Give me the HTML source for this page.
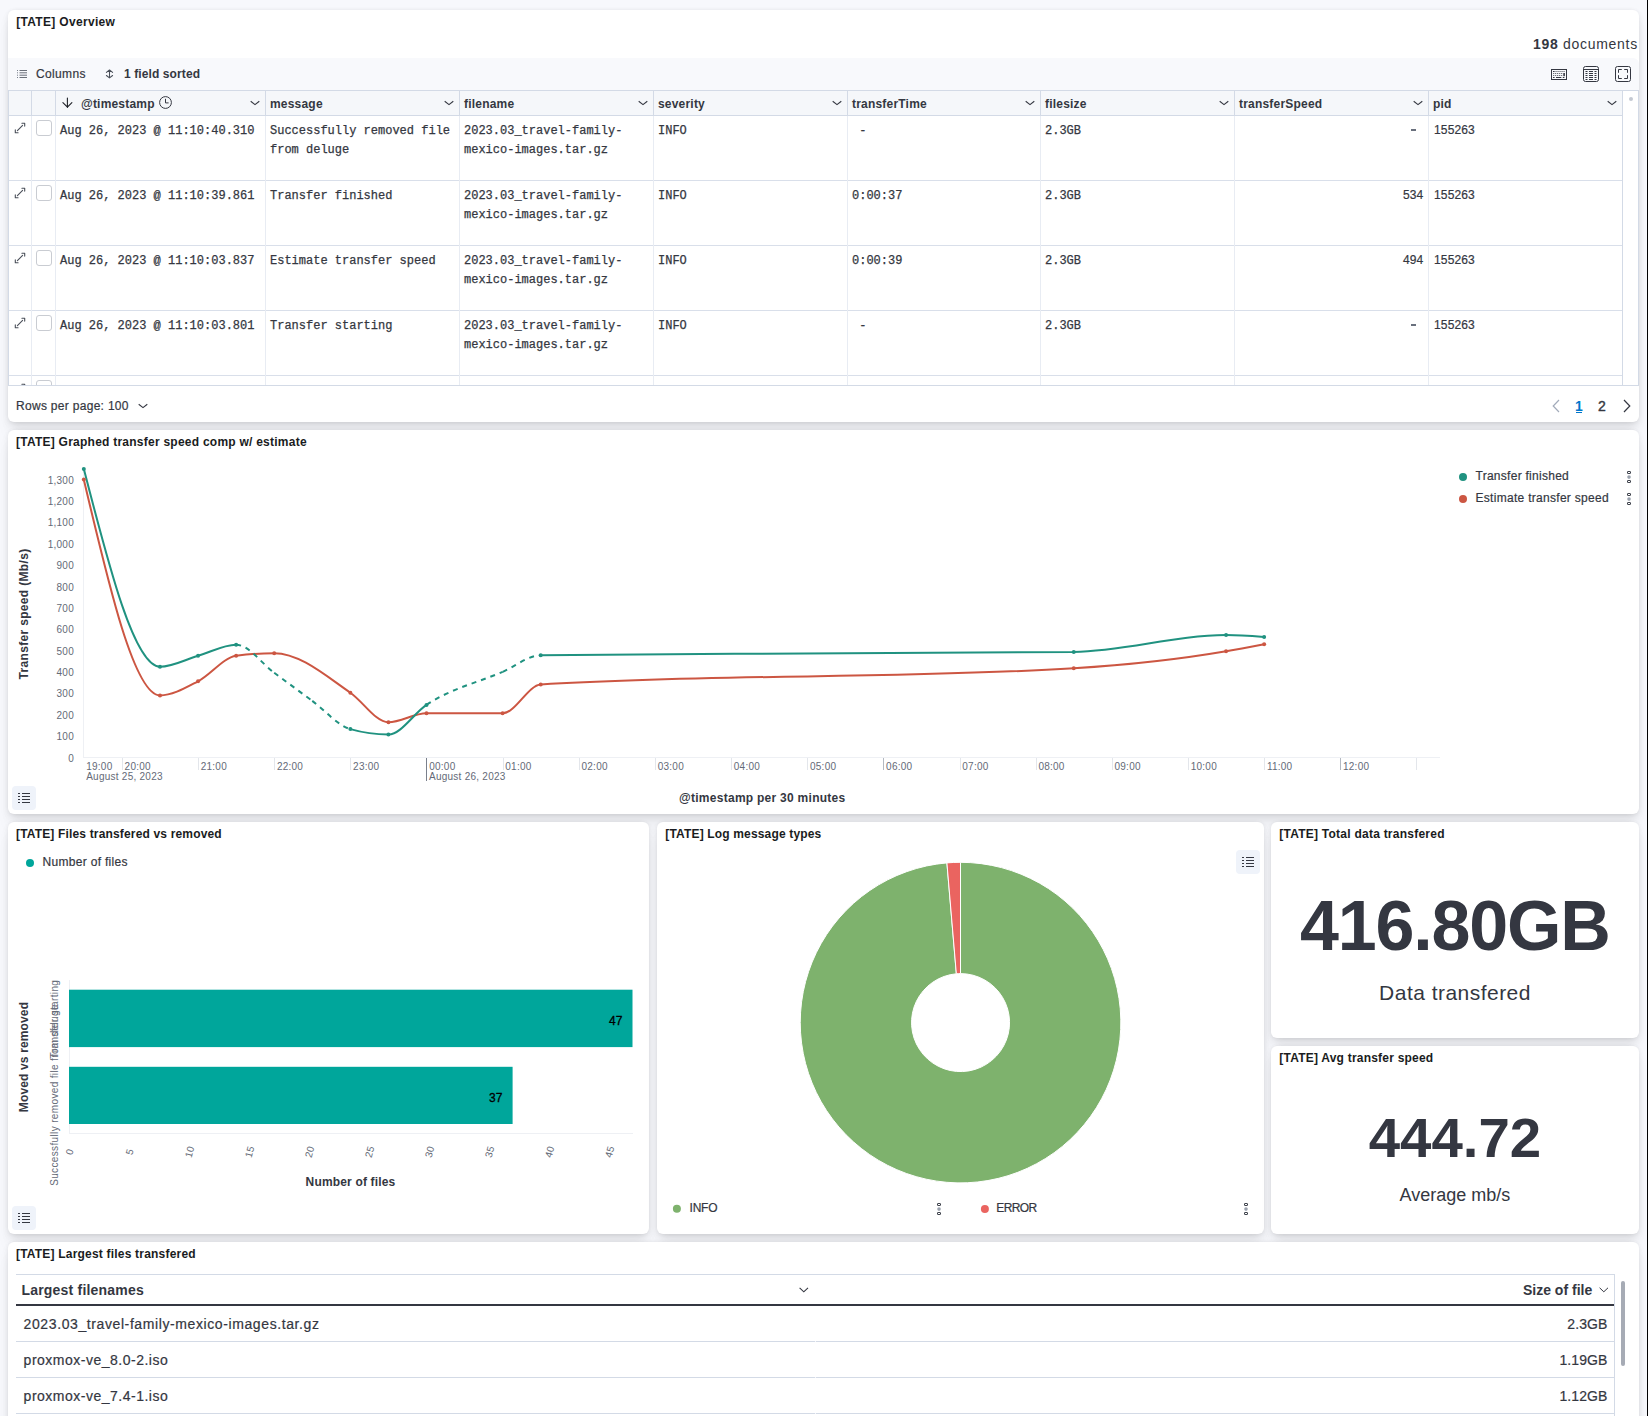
<!DOCTYPE html>
<html><head><meta charset="utf-8">
<style>
*{box-sizing:border-box;margin:0;padding:0}
html,body{width:1648px;height:1416px;overflow:hidden;background:#f7f8fc;font-family:"Liberation Sans",sans-serif;color:#343741}
.a{position:absolute;white-space:pre;line-height:1}
.p{position:absolute;background:#fff;border-radius:6px;box-shadow:0 .9px 4px -1px rgba(0,0,0,.08),0 2.6px 8px -1px rgba(0,0,0,.06),0 5.7px 12px -1px rgba(0,0,0,.05),0 15px 15px -1px rgba(0,0,0,.04)}
.t{font-weight:bold;font-size:12px;color:#1a1c21}
.m{font-family:"Liberation Mono",monospace;font-size:12px;color:#343741;-webkit-text-stroke:.25px #343741}
.hd{font-size:12px;font-weight:bold;color:#343741;letter-spacing:.2px}
.tk{font-size:10px;color:#646a77;letter-spacing:.25px}
.rs{-webkit-text-stroke:.2px currentColor}
.vl{position:absolute;width:1px;background:#e3e8f2}
.hl{position:absolute;height:1px;background:#d3dae6}
svg{position:absolute;overflow:visible}
</style></head><body>
<div class="a" style="left:1647px;top:0;width:1px;height:1416px;background:#000"></div>

<!-- P1 Overview -->
<div class="p" style="left:8px;top:10px;width:1631px;height:412px"></div>
<!-- P2 chart -->
<div class="p" style="left:8px;top:430px;width:1631px;height:384px"></div>
<!-- P3 bar -->
<div class="p" style="left:8px;top:822px;width:641px;height:412px"></div>
<!-- P4 pie -->
<div class="p" style="left:657px;top:822px;width:607px;height:412px"></div>
<!-- P5 total -->
<div class="p" style="left:1271px;top:822px;width:368px;height:216px"></div>
<!-- P6 avg -->
<div class="p" style="left:1271px;top:1046px;width:368px;height:188px"></div>
<!-- P7 largest -->
<div class="p" style="left:8px;top:1242px;width:1631px;height:200px"></div>

<div class="a" style="left:1533px;top:37px;font-size:14px;color:#343741;letter-spacing:.7px"><b>198</b> documents</div>
<div class="a" style="left:8px;top:58px;width:1631px;height:32px;background:#f8f9fc;border-radius:0 6px 0 0"></div>
<div class="a" style="left:8px;top:90px;width:1614px;height:26px;background:#f5f7fa"></div>
<div class="hl" style="left:8px;top:90px;width:1631px"></div>
<div class="hl" style="left:8px;top:115px;width:1614px"></div>
<div class="hl" style="left:8px;top:180px;width:1614px;background:#d9dfea"></div>
<div class="hl" style="left:8px;top:245px;width:1614px;background:#d9dfea"></div>
<div class="hl" style="left:8px;top:310px;width:1614px;background:#d9dfea"></div>
<div class="hl" style="left:8px;top:375px;width:1614px;background:#d9dfea"></div>
<div class="hl" style="left:8px;top:385px;width:1631px"></div>
<div class="vl" style="left:8px;top:90px;height:26px;background:#d3dae6"></div>
<div class="vl" style="left:8px;top:116px;height:269px;background:#d3dae6"></div>
<div class="vl" style="left:31px;top:90px;height:26px;background:#d3dae6"></div>
<div class="vl" style="left:31px;top:116px;height:269px;background:#e8ecf3"></div>
<div class="vl" style="left:55px;top:90px;height:26px;background:#d3dae6"></div>
<div class="vl" style="left:55px;top:116px;height:269px;background:#e8ecf3"></div>
<div class="vl" style="left:265px;top:90px;height:26px;background:#d3dae6"></div>
<div class="vl" style="left:265px;top:116px;height:269px;background:#e8ecf3"></div>
<div class="vl" style="left:459px;top:90px;height:26px;background:#d3dae6"></div>
<div class="vl" style="left:459px;top:116px;height:269px;background:#e8ecf3"></div>
<div class="vl" style="left:653px;top:90px;height:26px;background:#d3dae6"></div>
<div class="vl" style="left:653px;top:116px;height:269px;background:#e8ecf3"></div>
<div class="vl" style="left:847px;top:90px;height:26px;background:#d3dae6"></div>
<div class="vl" style="left:847px;top:116px;height:269px;background:#e8ecf3"></div>
<div class="vl" style="left:1040px;top:90px;height:26px;background:#d3dae6"></div>
<div class="vl" style="left:1040px;top:116px;height:269px;background:#e8ecf3"></div>
<div class="vl" style="left:1234px;top:90px;height:26px;background:#d3dae6"></div>
<div class="vl" style="left:1234px;top:116px;height:269px;background:#e8ecf3"></div>
<div class="vl" style="left:1428px;top:90px;height:26px;background:#d3dae6"></div>
<div class="vl" style="left:1428px;top:116px;height:269px;background:#e8ecf3"></div>
<div class="vl" style="left:1622px;top:90px;height:26px;background:#d3dae6"></div>
<div class="vl" style="left:1622px;top:116px;height:269px;background:#d3dae6"></div>
<div class="vl" style="left:1638px;top:90px;height:296px;background:#d3dae6"></div>
<div class="a" style="left:1629px;top:97px;width:4px;height:4px;border-radius:2px;background:#c4c9d2"></div>
<div class="a hd" style="left:81px;top:98px">@timestamp</div>
<div class="a hd" style="left:270px;top:98px">message</div>
<div class="a hd" style="left:464px;top:98px">filename</div>
<div class="a hd" style="left:658px;top:98px">severity</div>
<div class="a hd" style="left:852px;top:98px">transferTime</div>
<div class="a hd" style="left:1045px;top:98px">filesize</div>
<div class="a hd" style="left:1239px;top:98px">transferSpeed</div>
<div class="a hd" style="left:1433px;top:98px">pid</div>
<svg style="left:250px;top:100px" width="11" height="7" viewBox="0 0 11 7"><path d="M.7 1.2 5 4.6 9.3 1.2" fill="none" stroke="#343741" stroke-width="1.1"/></svg>
<svg style="left:444px;top:100px" width="11" height="7" viewBox="0 0 11 7"><path d="M.7 1.2 5 4.6 9.3 1.2" fill="none" stroke="#343741" stroke-width="1.1"/></svg>
<svg style="left:638px;top:100px" width="11" height="7" viewBox="0 0 11 7"><path d="M.7 1.2 5 4.6 9.3 1.2" fill="none" stroke="#343741" stroke-width="1.1"/></svg>
<svg style="left:832px;top:100px" width="11" height="7" viewBox="0 0 11 7"><path d="M.7 1.2 5 4.6 9.3 1.2" fill="none" stroke="#343741" stroke-width="1.1"/></svg>
<svg style="left:1025px;top:100px" width="11" height="7" viewBox="0 0 11 7"><path d="M.7 1.2 5 4.6 9.3 1.2" fill="none" stroke="#343741" stroke-width="1.1"/></svg>
<svg style="left:1219px;top:100px" width="11" height="7" viewBox="0 0 11 7"><path d="M.7 1.2 5 4.6 9.3 1.2" fill="none" stroke="#343741" stroke-width="1.1"/></svg>
<svg style="left:1413px;top:100px" width="11" height="7" viewBox="0 0 11 7"><path d="M.7 1.2 5 4.6 9.3 1.2" fill="none" stroke="#343741" stroke-width="1.1"/></svg>
<svg style="left:1607px;top:100px" width="11" height="7" viewBox="0 0 11 7"><path d="M.7 1.2 5 4.6 9.3 1.2" fill="none" stroke="#343741" stroke-width="1.1"/></svg>
<svg style="left:62px;top:96px" width="11" height="13" viewBox="0 0 11 13"><path d="M5.4 2V11.4M.9 6.6 5.4 11.2 9.9 6.6" fill="none" stroke="#1f2228" stroke-width="1.1" stroke-linecap="round" stroke-linejoin="round"/></svg>
<svg style="left:159px;top:96px" width="13" height="13" viewBox="0 0 13 13"><circle cx="6.5" cy="6.5" r="5.9" fill="none" stroke="#343741" stroke-width="1"/><path d="M6.5 2.8V6.9H9.6" fill="none" stroke="#343741" stroke-width="1"/></svg>
<svg style="left:14px;top:122px" width="12" height="12" viewBox="0 0 12 12"><path d="M3.4 8.6 8.6 3.4M7.9 1.3H10.7V4.1M1.3 7.9V10.7H4.1" fill="none" stroke="#4a4f59" stroke-width="1.1" stroke-linecap="round" stroke-linejoin="round"/></svg>
<div class="a" style="left:36px;top:120px;width:16px;height:16px;border:1px solid #c9ccd2;border-radius:3px;background:#fff"></div>
<div class="a m" style="left:60px;top:125px">Aug 26, 2023 @ 11:10:40.310</div>
<div class="a m" style="left:270px;top:125px">Successfully removed file</div>
<div class="a m" style="left:270px;top:144px">from deluge</div>
<div class="a m" style="left:464px;top:125px">2023.03_travel-family-</div>
<div class="a m" style="left:464px;top:144px">mexico-images.tar.gz</div>
<div class="a m" style="left:658px;top:125px">INFO</div>
<div class="a m" style="left:852px;top:125px"> -</div>
<div class="a m" style="left:1045px;top:125px">2.3GB</div>
<div class="a" style="left:1411px;top:129px;width:4.7px;height:2px;background:#69707d"></div>
<div class="a rs" style="left:1434px;top:124px;font-size:12px;letter-spacing:.15px">155263</div>
<svg style="left:14px;top:187px" width="12" height="12" viewBox="0 0 12 12"><path d="M3.4 8.6 8.6 3.4M7.9 1.3H10.7V4.1M1.3 7.9V10.7H4.1" fill="none" stroke="#4a4f59" stroke-width="1.1" stroke-linecap="round" stroke-linejoin="round"/></svg>
<div class="a" style="left:36px;top:185px;width:16px;height:16px;border:1px solid #c9ccd2;border-radius:3px;background:#fff"></div>
<div class="a m" style="left:60px;top:190px">Aug 26, 2023 @ 11:10:39.861</div>
<div class="a m" style="left:270px;top:190px">Transfer finished</div>
<div class="a m" style="left:464px;top:190px">2023.03_travel-family-</div>
<div class="a m" style="left:464px;top:209px">mexico-images.tar.gz</div>
<div class="a m" style="left:658px;top:190px">INFO</div>
<div class="a m" style="left:852px;top:190px">0:00:37</div>
<div class="a m" style="left:1045px;top:190px">2.3GB</div>
<div class="a rs" style="left:1403px;top:189px;font-size:12px;letter-spacing:.1px">534</div>
<div class="a rs" style="left:1434px;top:189px;font-size:12px;letter-spacing:.15px">155263</div>
<svg style="left:14px;top:252px" width="12" height="12" viewBox="0 0 12 12"><path d="M3.4 8.6 8.6 3.4M7.9 1.3H10.7V4.1M1.3 7.9V10.7H4.1" fill="none" stroke="#4a4f59" stroke-width="1.1" stroke-linecap="round" stroke-linejoin="round"/></svg>
<div class="a" style="left:36px;top:250px;width:16px;height:16px;border:1px solid #c9ccd2;border-radius:3px;background:#fff"></div>
<div class="a m" style="left:60px;top:255px">Aug 26, 2023 @ 11:10:03.837</div>
<div class="a m" style="left:270px;top:255px">Estimate transfer speed</div>
<div class="a m" style="left:464px;top:255px">2023.03_travel-family-</div>
<div class="a m" style="left:464px;top:274px">mexico-images.tar.gz</div>
<div class="a m" style="left:658px;top:255px">INFO</div>
<div class="a m" style="left:852px;top:255px">0:00:39</div>
<div class="a m" style="left:1045px;top:255px">2.3GB</div>
<div class="a rs" style="left:1403px;top:254px;font-size:12px;letter-spacing:.1px">494</div>
<div class="a rs" style="left:1434px;top:254px;font-size:12px;letter-spacing:.15px">155263</div>
<svg style="left:14px;top:317px" width="12" height="12" viewBox="0 0 12 12"><path d="M3.4 8.6 8.6 3.4M7.9 1.3H10.7V4.1M1.3 7.9V10.7H4.1" fill="none" stroke="#4a4f59" stroke-width="1.1" stroke-linecap="round" stroke-linejoin="round"/></svg>
<div class="a" style="left:36px;top:315px;width:16px;height:16px;border:1px solid #c9ccd2;border-radius:3px;background:#fff"></div>
<div class="a m" style="left:60px;top:320px">Aug 26, 2023 @ 11:10:03.801</div>
<div class="a m" style="left:270px;top:320px">Transfer starting</div>
<div class="a m" style="left:464px;top:320px">2023.03_travel-family-</div>
<div class="a m" style="left:464px;top:339px">mexico-images.tar.gz</div>
<div class="a m" style="left:658px;top:320px">INFO</div>
<div class="a m" style="left:852px;top:320px"> -</div>
<div class="a m" style="left:1045px;top:320px">2.3GB</div>
<div class="a" style="left:1411px;top:324px;width:4.7px;height:2px;background:#69707d"></div>
<div class="a rs" style="left:1434px;top:319px;font-size:12px;letter-spacing:.15px">155263</div>
<div class="a" style="left:8px;top:376px;width:1614px;height:9px;overflow:hidden"><svg style="left:6px;top:7px" width="12" height="12" viewBox="0 0 12 12"><path d="M3.4 8.6 8.6 3.4M7.9 1.3H10.7V4.1M1.3 7.9V10.7H4.1" fill="none" stroke="#4a4f59" stroke-width="1.1" stroke-linecap="round" stroke-linejoin="round"/></svg><div class="a" style="left:28px;top:4px;width:16px;height:16px;border:1px solid #c9ccd2;border-radius:3px"></div></div>
<svg style="left:17px;top:70px" width="10" height="8" viewBox="0 0 10 8"><path d="M0 .5h1M0 2.8h1M0 5.2h1M0 7.5h1" fill="none" stroke="#69707d" stroke-width=".9"/><path d="M2.5 .5H10M2.5 2.8H10M2.5 5.2H10M2.5 7.5H10" fill="none" stroke="#5a606b" stroke-width=".9"/></svg>
<div class="a rs" style="left:36px;top:68px;font-size:12px;letter-spacing:.35px">Columns</div>
<svg style="left:105px;top:67px" width="9" height="13" viewBox="0 0 9 13"><path d="M4.5 3.2V10.7M1.4 5.4 4.5 3 7.6 5.4M1.4 8.5 4.5 10.9 7.6 8.5" fill="none" stroke="#4a4f59" stroke-width="1.05" stroke-linecap="round" stroke-linejoin="round"/></svg>
<div class="a" style="left:124px;top:68px;font-size:12px;font-weight:bold;letter-spacing:.1px">1 field sorted</div>
<svg style="left:1551px;top:69px" width="16" height="11" viewBox="0 0 16 11"><rect x=".5" y=".5" width="15" height="10" fill="none" stroke="#343741"/><path d="M2 2.5h1.6M4.6 2.5h.9M6.6 2.5h.9M8.6 2.5h.9M10.6 2.5h.9M12.6 2.5h.9M2.3 4.5h.9M4.3 4.5h.9M6.3 4.5h.9M8.3 4.5h.9M10.3 4.5h.9M2.3 6.5h.9M4.3 6.5h.9M6.3 6.5h.9M8.3 6.5h.9M10.3 6.5h.9M2 8.5h1.6M5 8.5h5.3M11.8 8.5h1.6" fill="none" stroke="#343741" stroke-width="1"/><rect x="12.3" y="4" width="1.6" height="3.2" fill="#343741"/></svg>
<svg style="left:1583px;top:66px" width="16" height="16" viewBox="0 0 16 16"><rect x=".5" y=".5" width="15" height="15" rx="2" fill="none" stroke="#343741"/><path d="M.5 3.5h15M2.5 5.5h2M6 5.5h4M11.5 5.5h2M2.5 7.5h2M6 7.5h4M11.5 7.5h2M2.5 9.5h2M6 9.5h4M11.5 9.5h2M2.5 11.5h2M6 11.5h4M11.5 11.5h2M2.5 13.5h2M6 13.5h4M11.5 13.5h2" fill="none" stroke="#343741"/></svg>
<svg style="left:1615px;top:66px" width="16" height="16" viewBox="0 0 16 16"><rect x=".5" y=".5" width="15" height="15" rx="2" fill="none" stroke="#343741"/><path d="M3.5 6.8V3.5H6.8M9.2 3.5H12.5V6.8M12.5 9.2V12.5H9.2M6.8 12.5H3.5V9.2" fill="none" stroke="#343741"/></svg>
<div class="a rs" style="left:16px;top:400px;font-size:12px;letter-spacing:.3px">Rows per page: 100</div>
<svg style="left:138.2px;top:402.7px" width="11" height="7" viewBox="0 0 11 7"><path d="M.7 1.2 5 4.6 9.3 1.2" fill="none" stroke="#343741" stroke-width="1.1"/></svg>
<svg style="left:1552px;top:399px" width="8" height="14" viewBox="0 0 8 14"><path d="M7 1 1.2 7 7 13" fill="none" stroke="#a2abba" stroke-width="1.2"/></svg>
<div class="a" style="left:1575px;top:399px;font-size:14px;font-weight:bold;color:#0077cc">1</div>
<div class="a" style="left:1576px;top:412px;width:6px;height:1px;background:#0077cc"></div>
<div class="a" style="left:1598px;top:399px;font-size:14px;color:#343741;-webkit-text-stroke:.4px #343741">2</div>
<svg style="left:1623px;top:399px" width="8" height="14" viewBox="0 0 8 14"><path d="M1 1 6.8 7 1 13" fill="none" stroke="#343741" stroke-width="1.2"/></svg>
<svg style="left:0;top:0" width="1648" height="1416"><path d="M83.5 470V758M83.5 757.5H1440" stroke="#eef0f4" stroke-width="1" fill="none"/><path d="M122.5 758V770" stroke="#e3e6eb" stroke-width="1"/><path d="M198.5 758V770" stroke="#e3e6eb" stroke-width="1"/><path d="M274.5 758V770" stroke="#e3e6eb" stroke-width="1"/><path d="M350.5 758V770" stroke="#e3e6eb" stroke-width="1"/><path d="M426.5 758V781" stroke="#7a808c" stroke-width="1"/><path d="M503.5 758V770" stroke="#e3e6eb" stroke-width="1"/><path d="M579.5 758V770" stroke="#e3e6eb" stroke-width="1"/><path d="M655.5 758V770" stroke="#e3e6eb" stroke-width="1"/><path d="M731.5 758V770" stroke="#e3e6eb" stroke-width="1"/><path d="M807.5 758V770" stroke="#e3e6eb" stroke-width="1"/><path d="M883.5 758V770" stroke="#b4b9c2" stroke-width="1"/><path d="M960.5 758V770" stroke="#e3e6eb" stroke-width="1"/><path d="M1036.5 758V770" stroke="#e3e6eb" stroke-width="1"/><path d="M1112.5 758V770" stroke="#e3e6eb" stroke-width="1"/><path d="M1188.5 758V770" stroke="#e3e6eb" stroke-width="1"/><path d="M1264.5 758V770" stroke="#e3e6eb" stroke-width="1"/><path d="M1340.5 758V770" stroke="#b4b9c2" stroke-width="1"/><path d="M1416.5 758V770" stroke="#e3e6eb" stroke-width="1"/><path d="M83.82,479.60C109.21,587.50 134.59,695.40 159.97,695.40M159.97,695.40C172.67,695.40 185.36,687.90 198.05,681.30M198.05,681.30C210.74,674.70 223.43,657.53 236.12,655.80M236.12,655.80C248.82,654.07 261.51,653.20 274.20,653.20M274.20,653.20C299.58,653.20 324.97,675.16 350.35,692.70M350.35,692.70C363.04,701.47 375.73,722.30 388.43,722.30M388.43,722.30C401.12,722.30 413.81,713.30 426.50,713.30M426.50,713.30C451.88,713.30 477.27,713.30 502.65,713.30M502.65,713.30C515.34,713.30 528.03,685.27 540.73,684.50M540.73,684.50C718.41,673.70 896.09,679.10 1073.78,668.30M1073.78,668.30C1124.54,665.21 1175.31,660.01 1226.08,651.30M1226.08,651.30C1238.77,649.12 1251.46,646.66 1264.15,644.20" stroke="#cc5642" stroke-width="2" fill="none" stroke-linecap="round"/><path d="M83.82,468.90C109.21,567.80 134.59,666.70 159.97,666.70M159.97,666.70C172.67,666.70 185.36,659.47 198.05,655.80M198.05,655.80C210.74,652.13 223.43,644.70 236.12,644.70M350.35,729.10C363.04,732.70 375.73,734.50 388.43,734.50M388.43,734.50C401.12,734.50 413.81,713.32 426.50,704.90M540.73,655.30C718.41,653.03 896.09,654.17 1073.78,651.90M1073.78,651.90C1124.54,651.25 1175.31,635.00 1226.08,635.00M1226.08,635.00C1238.77,635.00 1251.46,635.95 1264.15,636.90" stroke="#209280" stroke-width="2" fill="none" stroke-linecap="round"/><path d="M236.12,644.70C248.82,644.70 261.51,663.43 274.20,672.80" stroke="#209280" stroke-width="2" fill="none" stroke-dasharray="5 5"/><path d="M274.20,672.80C286.89,682.17 299.58,691.52 312.27,700.90" stroke="#209280" stroke-width="2" fill="none" stroke-dasharray="5 5"/><path d="M312.27,700.90C324.97,710.28 337.66,725.50 350.35,729.10" stroke="#209280" stroke-width="2" fill="none" stroke-dasharray="5 5"/><path d="M426.50,704.90C451.88,688.07 477.27,682.81 502.65,671.80" stroke="#209280" stroke-width="2" fill="none" stroke-dasharray="5 5"/><path d="M502.65,671.80C515.34,666.29 528.03,655.46 540.73,655.30" stroke="#209280" stroke-width="2" fill="none" stroke-dasharray="5 5"/><circle cx="83.82" cy="479.60" r="2" fill="#cc5642"/><circle cx="159.97" cy="695.40" r="2" fill="#cc5642"/><circle cx="198.05" cy="681.30" r="2" fill="#cc5642"/><circle cx="236.12" cy="655.80" r="2" fill="#cc5642"/><circle cx="274.20" cy="653.20" r="2" fill="#cc5642"/><circle cx="350.35" cy="692.70" r="2" fill="#cc5642"/><circle cx="388.43" cy="722.30" r="2" fill="#cc5642"/><circle cx="426.50" cy="713.30" r="2" fill="#cc5642"/><circle cx="502.65" cy="713.30" r="2" fill="#cc5642"/><circle cx="540.73" cy="684.50" r="2" fill="#cc5642"/><circle cx="1073.78" cy="668.30" r="2" fill="#cc5642"/><circle cx="1226.08" cy="651.30" r="2" fill="#cc5642"/><circle cx="1264.15" cy="644.20" r="2" fill="#cc5642"/><circle cx="83.82" cy="468.90" r="2" fill="#209280"/><circle cx="159.97" cy="666.70" r="2" fill="#209280"/><circle cx="198.05" cy="655.80" r="2" fill="#209280"/><circle cx="236.12" cy="644.70" r="2" fill="#209280"/><circle cx="350.35" cy="729.10" r="2" fill="#209280"/><circle cx="388.43" cy="734.50" r="2" fill="#209280"/><circle cx="426.50" cy="704.90" r="2" fill="#209280"/><circle cx="540.73" cy="655.30" r="2" fill="#209280"/><circle cx="1073.78" cy="651.90" r="2" fill="#209280"/><circle cx="1226.08" cy="635.00" r="2" fill="#209280"/><circle cx="1264.15" cy="636.90" r="2" fill="#209280"/><circle cx="1463" cy="477" r="4" fill="#209280"/><circle cx="1463" cy="499" r="4" fill="#cc5642"/></svg>
<div class="a tk" style="right:1574px;top:753.5px">0</div>
<div class="a tk" style="right:1574px;top:732.1px">100</div>
<div class="a tk" style="right:1574px;top:710.7px">200</div>
<div class="a tk" style="right:1574px;top:689.4px">300</div>
<div class="a tk" style="right:1574px;top:668.0px">400</div>
<div class="a tk" style="right:1574px;top:646.6px">500</div>
<div class="a tk" style="right:1574px;top:625.2px">600</div>
<div class="a tk" style="right:1574px;top:603.9px">700</div>
<div class="a tk" style="right:1574px;top:582.5px">800</div>
<div class="a tk" style="right:1574px;top:561.1px">900</div>
<div class="a tk" style="right:1574px;top:539.7px">1,000</div>
<div class="a tk" style="right:1574px;top:518.4px">1,100</div>
<div class="a tk" style="right:1574px;top:497.0px">1,200</div>
<div class="a tk" style="right:1574px;top:475.6px">1,300</div>
<div class="a tk" style="left:124.6px;top:762px">20:00</div>
<div class="a tk" style="left:200.7px;top:762px">21:00</div>
<div class="a tk" style="left:276.9px;top:762px">22:00</div>
<div class="a tk" style="left:353.1px;top:762px">23:00</div>
<div class="a tk" style="left:429.2px;top:762px">00:00</div>
<div class="a tk" style="left:505.3px;top:762px">01:00</div>
<div class="a tk" style="left:581.5px;top:762px">02:00</div>
<div class="a tk" style="left:657.7px;top:762px">03:00</div>
<div class="a tk" style="left:733.8px;top:762px">04:00</div>
<div class="a tk" style="left:810.0px;top:762px">05:00</div>
<div class="a tk" style="left:886.1px;top:762px">06:00</div>
<div class="a tk" style="left:962.3px;top:762px">07:00</div>
<div class="a tk" style="left:1038.4px;top:762px">08:00</div>
<div class="a tk" style="left:1114.5px;top:762px">09:00</div>
<div class="a tk" style="left:1190.7px;top:762px">10:00</div>
<div class="a tk" style="left:1266.9px;top:762px">11:00</div>
<div class="a tk" style="left:1343.0px;top:762px">12:00</div>
<div class="a tk" style="left:86.2px;top:762px">19:00</div>
<div class="a tk" style="left:86.2px;top:772px">August 25, 2023</div>
<div class="a tk" style="left:429.0px;top:772px">August 26, 2023</div>
<div class="a" style="left:23.7px;top:613.8px;transform:translate(-50%,-50%) rotate(-90deg);font-size:12px;font-weight:bold;letter-spacing:.33px;color:#343741">Transfer speed (Mb/s)</div>
<div class="a" style="left:679px;top:791.5px;font-size:12px;font-weight:bold;letter-spacing:.27px;color:#343741">@timestamp per 30 minutes</div>
<div class="a rs" style="left:1475.5px;top:469.5px;font-size:12px;letter-spacing:.27px;color:#343741">Transfer finished</div>
<div class="a rs" style="left:1475.5px;top:491.5px;font-size:12px;letter-spacing:.29px;color:#343741">Estimate transfer speed</div>
<svg style="left:1627px;top:471px" width="4" height="12" viewBox="0 0 4 12"><rect x=".5" y=".5" width="3" height="2" rx=".3" fill="none" stroke="#3f434c" stroke-width="1"/><circle cx="2" cy="6.1" r="1.8" fill="#9aa1ad"/><rect x=".5" y="9.5" width="3" height="2" rx=".3" fill="none" stroke="#3f434c" stroke-width="1"/></svg>
<svg style="left:1627px;top:493px" width="4" height="12" viewBox="0 0 4 12"><rect x=".5" y=".5" width="3" height="2" rx=".3" fill="none" stroke="#3f434c" stroke-width="1"/><circle cx="2" cy="6.1" r="1.8" fill="#9aa1ad"/><rect x=".5" y="9.5" width="3" height="2" rx=".3" fill="none" stroke="#3f434c" stroke-width="1"/></svg>
<div class="a" style="left:12px;top:786px;width:24px;height:24px;border-radius:4px;background:#eff3fa"></div>
<svg style="left:18px;top:793px" width="12" height="10" viewBox="0 0 12 10"><path d="M0 .5h2M4 .5h8M0 3.5h2M4 3.5h8M0 6.5h2M4 6.5h8M0 9.5h2M4 9.5h8" fill="none" stroke="#343741" stroke-width="1"/></svg>
<svg style="left:0;top:0" width="1" height="1"><circle cx="30" cy="862.9" r="4" fill="#00a69b"/></svg>
<div class="a rs" style="left:42.5px;top:856px;font-size:12px;letter-spacing:.31px">Number of files</div>
<svg style="left:0;top:0" width="1" height="1"><path d="M69.5 980V1134M69 1133.5H633" stroke="#eef0f4" fill="none"/><rect x="69" y="989.7" width="563.5" height="57.4" fill="#00a69b"/><rect x="69" y="1066.8" width="443.6" height="57.2" fill="#00a69b"/></svg>
<div class="a" style="left:609px;top:1014.7px;font-size:12px;color:#000;-webkit-text-stroke:.3px #000">47</div>
<div class="a" style="left:489px;top:1091.5px;font-size:12px;color:#000;-webkit-text-stroke:.3px #000">37</div>
<div class="a tk" style="left:70.2px;top:1151.8px;transform:translate(-50%,-50%) rotate(-75deg);letter-spacing:0">0</div>
<div class="a tk" style="left:130.2px;top:1151.8px;transform:translate(-50%,-50%) rotate(-75deg);letter-spacing:0">5</div>
<div class="a tk" style="left:190.2px;top:1151.8px;transform:translate(-50%,-50%) rotate(-75deg);letter-spacing:0">10</div>
<div class="a tk" style="left:250.2px;top:1151.8px;transform:translate(-50%,-50%) rotate(-75deg);letter-spacing:0">15</div>
<div class="a tk" style="left:310.2px;top:1151.8px;transform:translate(-50%,-50%) rotate(-75deg);letter-spacing:0">20</div>
<div class="a tk" style="left:370.2px;top:1151.8px;transform:translate(-50%,-50%) rotate(-75deg);letter-spacing:0">25</div>
<div class="a tk" style="left:430.2px;top:1151.8px;transform:translate(-50%,-50%) rotate(-75deg);letter-spacing:0">30</div>
<div class="a tk" style="left:490.2px;top:1151.8px;transform:translate(-50%,-50%) rotate(-75deg);letter-spacing:0">35</div>
<div class="a tk" style="left:550.2px;top:1151.8px;transform:translate(-50%,-50%) rotate(-75deg);letter-spacing:0">40</div>
<div class="a tk" style="left:610.2px;top:1151.8px;transform:translate(-50%,-50%) rotate(-75deg);letter-spacing:0">45</div>
<div class="a tk" style="left:54.5px;top:1095.4px;transform:translate(-50%,-50%) rotate(-90deg);letter-spacing:.36px">Successfully removed file from deluge</div>
<div class="a tk" style="left:54.5px;top:1018.5px;transform:translate(-50%,-50%) rotate(-90deg);letter-spacing:.36px">Transfer starting</div>
<div class="a" style="left:23.6px;top:1056.6px;transform:translate(-50%,-50%) rotate(-90deg);font-size:12px;font-weight:bold;letter-spacing:.14px">Moved vs removed</div>
<div class="a" style="left:305.6px;top:1176.2px;font-size:12px;font-weight:bold;letter-spacing:.16px">Number of files</div>
<div class="a" style="left:12px;top:1206px;width:24px;height:24px;border-radius:4px;background:#eff3fa"></div>
<svg style="left:18px;top:1213px" width="12" height="10" viewBox="0 0 12 10"><path d="M0 .5h2M4 .5h8M0 3.5h2M4 3.5h8M0 6.5h2M4 6.5h8M0 9.5h2M4 9.5h8" fill="none" stroke="#343741" stroke-width="1"/></svg>
<svg style="left:0;top:0" width="1" height="1"><path d="M960.50,862.30A160.3,160.3 0 1 1 946.92,862.88L956.35,973.78A49,49 0 1 0 960.50,973.60Z" fill="#7eb26d" stroke="#fff" stroke-width="1" stroke-linejoin="round"/><path d="M946.92,862.88A160.3,160.3 0 0 1 960.50,862.30L960.50,973.60A49,49 0 0 0 956.35,973.78Z" fill="#ea6460" stroke="#fff" stroke-width="1" stroke-linejoin="round"/></svg>
<div class="a" style="left:1236px;top:850px;width:24px;height:24px;border-radius:4px;background:#eff3fa"></div>
<svg style="left:1242px;top:857px" width="12" height="10" viewBox="0 0 12 10"><path d="M0 .5h2M4 .5h8M0 3.5h2M4 3.5h8M0 6.5h2M4 6.5h8M0 9.5h2M4 9.5h8" fill="none" stroke="#343741" stroke-width="1"/></svg>
<svg style="left:0;top:0" width="1" height="1"><circle cx="676.9" cy="1208.8" r="4" fill="#7eb26d"/><circle cx="984.9" cy="1209" r="4" fill="#ea6460"/></svg>
<div class="a rs" style="left:689.5px;top:1201.8px;font-size:12px;letter-spacing:-.2px">INFO</div>
<div class="a rs" style="left:996.3px;top:1201.8px;font-size:12px;letter-spacing:-.6px">ERROR</div>
<svg style="left:937px;top:1203px" width="4" height="12" viewBox="0 0 4 12"><rect x=".5" y=".5" width="3" height="2" rx=".3" fill="none" stroke="#3f434c" stroke-width="1"/><circle cx="2" cy="6.1" r="1.8" fill="#9aa1ad"/><rect x=".5" y="9.5" width="3" height="2" rx=".3" fill="none" stroke="#3f434c" stroke-width="1"/></svg>
<svg style="left:1244px;top:1203px" width="4" height="12" viewBox="0 0 4 12"><rect x=".5" y=".5" width="3" height="2" rx=".3" fill="none" stroke="#3f434c" stroke-width="1"/><circle cx="2" cy="6.1" r="1.8" fill="#9aa1ad"/><rect x=".5" y="9.5" width="3" height="2" rx=".3" fill="none" stroke="#3f434c" stroke-width="1"/></svg>
<div class="a" id="m1" style="left:1300px;top:890.6px;font-size:70px;font-weight:bold;letter-spacing:-1.2px;color:#343741">416.80GB</div>
<div class="a" id="m2" style="left:1379.1px;top:982.3px;font-size:21px;letter-spacing:.47px;color:#343741">Data transfered</div>
<div class="a" id="m3" style="left:1368.75px;top:1110.1px;font-size:56.4px;font-weight:bold;color:#343741">444.72</div>
<div class="a" id="m4" style="left:1399.5px;top:1185.5px;font-size:18px;color:#343741">Average mb/s</div>
<div class="hl" style="left:16px;top:1274px;width:1599px"></div>
<div class="vl" style="left:1614px;top:1274px;height:150px;background:#d3dae6"></div>
<div class="a" style="left:21.4px;top:1283px;font-size:14px;font-weight:bold;letter-spacing:.21px;color:#343741">Largest filenames</div>
<svg style="left:798.5px;top:1287px" width="10" height="6" viewBox="0 0 10 6"><path d="M.6 .8 4.8 4.8 9 .8" fill="none" stroke="#343741" stroke-width="1.1"/></svg>
<div class="a" style="right:55.8px;top:1283px;font-size:14px;font-weight:bold;color:#343741">Size of file</div>
<svg style="left:1598.5px;top:1287.3px" width="10" height="6" viewBox="0 0 10 6"><path d="M.6 .8 4.8 4.8 9 .8" fill="none" stroke="#343741" stroke-width="1"/></svg>
<div class="a" style="left:16px;top:1304px;width:1598px;height:2px;background:#343741"></div>
<div class="hl" style="left:16px;top:1341px;width:1598px"></div>
<div class="hl" style="left:16px;top:1377px;width:1598px"></div>
<div class="hl" style="left:16px;top:1413px;width:1598px"></div>
<div class="a" style="left:815px;top:1341px;width:1px;height:1px;background:#f4f6fa"></div>
<div class="a" style="left:815px;top:1377px;width:1px;height:1px;background:#f4f6fa"></div>
<div class="a" style="left:815px;top:1413px;width:1px;height:1px;background:#f4f6fa"></div>
<div class="a rs" style="left:23.6px;top:1317.1px;font-size:14px;letter-spacing:0.6px;color:#343741">2023.03_travel-family-mexico-images.tar.gz</div>
<div class="a rs" style="right:40.5px;top:1317.1px;font-size:14px;letter-spacing:.1px;color:#343741">2.3GB</div>
<div class="a rs" style="left:23.6px;top:1352.9px;font-size:14px;letter-spacing:0.5px;color:#343741">proxmox-ve_8.0-2.iso</div>
<div class="a rs" style="right:40.5px;top:1352.9px;font-size:14px;letter-spacing:.1px;color:#343741">1.19GB</div>
<div class="a rs" style="left:23.6px;top:1388.7px;font-size:14px;letter-spacing:0.5px;color:#343741">proxmox-ve_7.4-1.iso</div>
<div class="a rs" style="right:40.5px;top:1388.7px;font-size:14px;letter-spacing:.1px;color:#343741">1.12GB</div>
<div class="a" style="left:1621px;top:1280.5px;width:4px;height:85px;border-radius:2px;background:#a6abb5"></div>
<!-- titles -->
<div class="a t" style="left:16.2px;top:16px;letter-spacing:0.32px">[TATE] Overview</div>
<div class="a t" style="left:16.0px;top:436px;letter-spacing:0.244px">[TATE] Graphed transfer speed comp w/ estimate</div>
<div class="a t" style="left:16.0px;top:828px;letter-spacing:0.164px">[TATE] Files transfered vs removed</div>
<div class="a t" style="left:665.3px;top:828px;letter-spacing:0.161px">[TATE] Log message types</div>
<div class="a t" style="left:1279.3px;top:828px;letter-spacing:0.241px">[TATE] Total data transfered</div>
<div class="a t" style="left:1279.3px;top:1052px;letter-spacing:0.217px">[TATE] Avg transfer speed</div>
<div class="a t" style="left:16.0px;top:1248px;letter-spacing:0.2px">[TATE] Largest files transfered</div>

</body></html>
